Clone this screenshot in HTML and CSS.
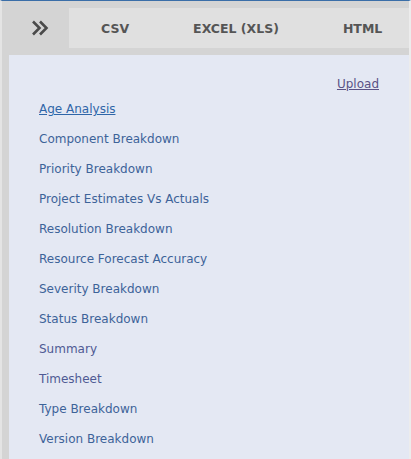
FILE: index.html
```html
<!DOCTYPE html>
<html lang="en">
<head>
  <meta charset="UTF-8">
  <meta name="viewport" content="width=device-width, initial-scale=1.0">
  <title>Reports</title>
  <link rel="stylesheet" href="styles.css">
</head>
<body>

  <div class="toolbar">
    <div class="toggle">
      <svg width="18" height="16" viewBox="0 0 18 16">
        <path d="M2 1.5 L8.5 8 L2 14.5 M9 1.5 L15.5 8 L9 14.5" fill="none" stroke="#4a4a4a" stroke-width="2.6"/>
      </svg>
    </div>
    <div class="tabs">
      <span class="tab">CSV</span>
      <span class="tab">EXCEL (XLS)</span>
      <span class="tab">HTML</span>
    </div>
  </div>

  <div class="panel">
    <div class="upload-row">
      <a href="#" class="upload">Upload</a>
    </div>
    <ul class="reports">
      <li><a href="#" class="active">Age Analysis</a></li>
      <li><a href="#">Component Breakdown</a></li>
      <li><a href="#">Priority Breakdown</a></li>
      <li><a href="#">Project Estimates Vs Actuals</a></li>
      <li><a href="#">Resolution Breakdown</a></li>
      <li><a href="#">Resource Forecast Accuracy</a></li>
      <li><a href="#">Severity Breakdown</a></li>
      <li><a href="#">Status Breakdown</a></li>
      <li><a href="#" class="visited">Summary</a></li>
      <li><a href="#" class="visited">Timesheet</a></li>
      <li><a href="#">Type Breakdown</a></li>
      <li><a href="#">Version Breakdown</a></li>
    </ul>
  </div>

</body>
</html>
```

FILE: styles.css
```css
html, body {
  height: 100%;
}

body {
  margin: 0;
  display: flex;
  flex-direction: column;
  font-family: 'DejaVu Sans', Verdana, sans-serif;
  background-color: #d4d4d4;
  border-top: 1px solid #3a6ea8;
  border-left: 2px solid #e4e4e4;
  border-right: 2px solid #ececec;
  box-sizing: border-box;
  overflow: hidden;
}

.toolbar {
  display: flex;
  flex-shrink: 0;
  height: 40px;
  margin-top: 7px;
}

.toggle {
  width: 67px;
  flex-shrink: 0;
  display: flex;
  align-items: center;
  justify-content: center;
  padding-left: 8px;
  box-sizing: border-box;
}

.tabs {
  flex: 1;
  display: flex;
  align-items: center;
  background-color: #e0e0e0;
  overflow: hidden;
}

.tab {
  flex-shrink: 0;
  white-space: nowrap;
  padding: 0 32px;
  font-size: 12.5px;
  font-weight: bold;
  color: #555;
}

.panel {
  flex: 1;
  margin: 7px 0 0 7px;
  padding: 19px 30px 0 30px;
  background-color: #e4e8f3;
  overflow: hidden;
}

.upload-row {
  text-align: right;
  font-size: 12px;
  line-height: 20px;
}

.upload {
  color: #5a5286;
}

.reports {
  list-style: none;
  margin: 0;
  padding: 0;
}

.reports li {
  font-size: 12px;
  line-height: 30px;
}

.reports a {
  color: #3d6399;
  text-decoration: none;
}

.reports a.active {
  color: #2f66a8;
  text-decoration: underline;
}

.reports a.visited {
  color: #4f5a94;
}
```
